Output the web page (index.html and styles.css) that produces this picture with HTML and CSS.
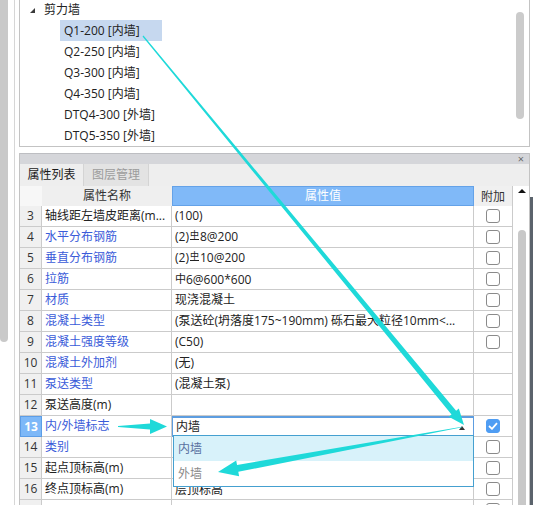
FILE: index.html
```html
<!DOCTYPE html>
<html lang="zh">
<head>
<meta charset="utf-8">
<link rel="stylesheet" href="styles.css">
</head>
<body>
<div class="app">
  <div class="lscroll"><div class="lthumb"></div></div>
  <div class="vline"></div>
  <div class="main">
    <div class="tree">
      <div class="tree-body">
        <div class="tnode root"><span class="twist"></span>剪力墙</div>
        <div class="tnode child"><span class="sel">Q1-200 [内墙]</span></div>
        <div class="tnode child"><span>Q2-250 [内墙]</span></div>
        <div class="tnode child"><span>Q3-300 [内墙]</span></div>
        <div class="tnode child"><span>Q4-350 [内墙]</span></div>
        <div class="tnode child"><span>DTQ4-300 [外墙]</span></div>
        <div class="tnode child"><span>DTQ5-350 [外墙]</span></div>
      </div>
      <div class="tscroll"><div class="tthumb"></div></div>
    </div>
    <div class="props">
      <div class="ptitle"><span class="close">×</span></div>
      <div class="tabs">
        <div class="tab active">属性列表</div>
        <div class="tab">图层管理</div>
      </div>
      <div class="gridwrap">
        <div class="grid">
          <div class="c h n"></div><div class="c h nm">属性名称</div><div class="c h v">属性值</div><div class="c h a">附加</div>

          <div class="c n">3</div><div class="c nm">轴线距左墙皮距离(m...</div><div class="c v">(100)</div><div class="c a"><span class="cb"></span></div>
          <div class="c n">4</div><div class="c nm blue">水平分布钢筋</div><div class="c v">(2)<span class="rb">中</span>8@200</div><div class="c a"><span class="cb"></span></div>
          <div class="c n">5</div><div class="c nm blue">垂直分布钢筋</div><div class="c v">(2)<span class="rb">中</span>10@200</div><div class="c a"><span class="cb"></span></div>
          <div class="c n">6</div><div class="c nm blue">拉筋</div><div class="c v"><span class="rb1">中</span>6@600*600</div><div class="c a"><span class="cb"></span></div>
          <div class="c n">7</div><div class="c nm blue">材质</div><div class="c v">现浇混凝土</div><div class="c a"><span class="cb"></span></div>
          <div class="c n">8</div><div class="c nm blue">混凝土类型</div><div class="c v">(泵送砼(坍落度175~190mm) 砾石最大粒径10mm&lt;...</div><div class="c a"><span class="cb"></span></div>
          <div class="c n">9</div><div class="c nm blue">混凝土强度等级</div><div class="c v">(C50)</div><div class="c a"><span class="cb"></span></div>
          <div class="c n">10</div><div class="c nm blue">混凝土外加剂</div><div class="c v">(无)</div><div class="c a"></div>
          <div class="c n">11</div><div class="c nm blue">泵送类型</div><div class="c v">(混凝土泵)</div><div class="c a"></div>
          <div class="c n">12</div><div class="c nm">泵送高度(m)</div><div class="c v"></div><div class="c a"></div>
          <div class="c n cur">13</div><div class="c nm blue">内/外墙标志</div><div class="c v edit">内墙<span class="caret"></span></div><div class="c a"><span class="cb on"><svg width="10" height="8" viewBox="0 0 10 8"><path d="M1 4 L4 6.8 L9 1.2" fill="none" stroke="#fff" stroke-width="1.8"/></svg></span></div>
          <div class="c n">14</div><div class="c nm blue">类别</div><div class="c v"></div><div class="c a"><span class="cb"></span></div>
          <div class="c n">15</div><div class="c nm">起点顶标高(m)</div><div class="c v"></div><div class="c a"><span class="cb"></span></div>
          <div class="c n">16</div><div class="c nm">终点顶标高(m)</div><div class="c v low">层顶标高</div><div class="c a"><span class="cb"></span></div>
          <div class="c n"></div><div class="c nm"></div><div class="c v"></div><div class="c a"><span class="cb"></span></div>
        </div>
        <div class="gscroll"><div class="uparrow"></div><div class="gthumb"></div></div>
      </div>
    </div>
  </div>
  <div class="rstrip"><div class="dark"></div></div>
</div>

<div class="dropdown">
  <div class="opt hover">内墙</div>
  <div class="opt">外墙</div>
</div>

<svg class="arrows" width="533" height="505" viewBox="0 0 533 505">
  <polygon points="142.54,36.38 451.51,414.57 448.81,416.80 464,425 458.83,408.52 456.13,410.75 143.46,35.62"/>
  <polygon points="461.95,426.70 237.04,464.93 236.22,460.50 218,472 239.12,476.24 238.30,471.81 462.05,427.30"/>
  <polygon points="118,426 150,423.5 150,419 167,426.5 150,434 150,429.5 118,427"/>
</svg>
</body>
</html>
```

FILE: styles.css
```css
* { box-sizing: border-box; margin: 0; padding: 0; }
html, body { width: 533px; height: 505px; overflow: hidden; background: #fff; }
body {
  font-family: "Open Sans", "Noto Sans CJK SC", sans-serif;
  font-size: 12px;
  color: #222;
  position: relative;
}
.app { display: flex; height: 505px; }

.lscroll { width: 8px; flex: none; }
.lthumb { height: 342px; background: #c9c9c9; border-radius: 0 0 4px 4px; }
.vline { width: 1px; margin-left: 6px; background: #d6d6d6; flex: none; }

.main { width: 511px; margin-left: 4px; flex: none; display: flex; flex-direction: column; }

/* tree */
.tree { height: 147px; flex: none; display: flex; border: 1px solid #c3c3c3; border-top: none; }
.tree-body { flex: 1; }
.tnode { height: 21px; line-height: 21px; white-space: nowrap; }
.tnode.root { height: 20px; line-height: 20px; padding-left: 10px; display: flex; align-items: center; }
.twist { width: 0; height: 0; border-left: 5px solid transparent; border-bottom: 5px solid #3a3a3a; margin-right: 9px; margin-top: 1px; }
.tnode.child { padding-left: 40px; }
.tnode.child span { display: inline-block; height: 21px; padding: 0 4px; }
.tnode.child .sel { background: #c6d8ef; min-width: 102px; }
.tscroll { width: 13px; flex: none; }
.tthumb { margin-top: 12px; width: 8px; height: 107px; background: #cbcbcb; border-radius: 4px; }

/* property panel */
.props {
  margin-top: 6px; flex: 1; min-height: 0;
  display: flex; flex-direction: column;
  border-left: 1px solid #c3c3c3; border-right: 1px solid #c3c3c3;
}
.ptitle {
  height: 11px; flex: none; background: #d5d6da; border-top: 1px solid #bdbec2;
  display: flex; justify-content: flex-end; align-items: center; padding-right: 5px;
}
.close { font-size: 11px; line-height: 10px; color: #6a6a6a; }
.tabs { height: 22px; flex: none; background: #eeeeee; display: flex; }
.tab { line-height: 22px; text-align: center; border-right: 1px solid #d4d4d4; }
.tab.active { width: 64px; color: #1a1a1a; background: #eeeeee; }
.tab:not(.active) { width: 65px; color: #9c9c9c; background: #e3e3e3; }

.gridwrap { flex: 1; min-height: 0; display: flex; overflow: hidden; }
.grid {
  display: grid;
  grid-template-columns: 22px 130px 302px 39px;
  grid-template-rows: 20px;
  grid-auto-rows: 21px;
  flex: none;
  position: relative;
}
.c {
  border-right: 1px solid #cbcbcb; border-bottom: 1px solid #cbcbcb;
  line-height: 20px; white-space: nowrap; overflow: hidden;
}
.n { background: #f0f0f0; text-align: center; color: #333; }
.nm { padding-left: 3px; }
.v { padding-left: 3px; }
.v.low { line-height: 22px; }
.a { display: flex; align-items: center; justify-content: center; }
.blue { color: #3a5bd9; }

.h { line-height: 19px; }
.h.n { background: #f7f7f7; border-right: none; border-bottom: none; }
.h.nm { background: #efefef; text-align: center; color: #333; padding-left: 0; border-right: none; border-bottom: none; }
.h.v { background: #80b9f8; border: 1px solid #64a2e8; color: #fff; text-align: center; padding-left: 0; line-height: 18px; }
.h.a { background: #f0f0f0; color: #333; border-bottom: none; }

.rb { font-size: 9px; vertical-align: 3px; margin: 0 1px; border-bottom: 1px solid #222; line-height: 9px; display: inline-block; }
.rb1 { font-size: 11px; vertical-align: 1px; }

.n.cur { background: #7db8f8; color: #fff; font-weight: bold; border: 1px solid #5c9de6; line-height: 19px; }
.v.edit { border: 1px solid #5d9de0; border-top-width: 2px; position: relative; line-height: 18px; }
.caret {
  position: absolute; right: 8px; top: 8px;
  width: 0; height: 0;
  border-left: 3px solid transparent; border-right: 3px solid transparent; border-bottom: 4px solid #333;
}

.cb { width: 14px; height: 14px; border: 1px solid #8a8a8a; border-radius: 3px; background: #fff; display: flex; align-items: center; justify-content: center; }
.cb.on { background: #4f9df3; border-color: #4f9df3; }

.gscroll { width: 16px; flex: none; display: flex; flex-direction: column; }
.uparrow {
  margin: 3px 0 0 5px; width: 0; height: 0;
  border-left: 4px solid transparent; border-right: 4px solid transparent; border-bottom: 4px solid #111;
}
.gthumb { margin: 37px 0 0 5px; width: 8px; flex: 1; background: #c8c8c8; border-radius: 4px 4px 0 0; }

.rstrip { width: 3px; flex: none; display: flex; flex-direction: column; }
.dark { margin-top: 197px; flex: 1; background: #5b636c; }

/* dropdown overlay */
.dropdown {
  position: absolute; left: 173px; top: 435px; width: 301px; height: 52px;
  border: 1px solid #45a0d0; background: #fff;
}
.opt { height: 25px; line-height: 25px; padding-left: 4px; color: #8a8a8a; }
.opt.hover { background: #d8f2fa; color: #5870a0; }

.arrows { position: absolute; left: 0; top: 0; pointer-events: none; }
.arrows polygon { fill: #1fd9d9; }
```
